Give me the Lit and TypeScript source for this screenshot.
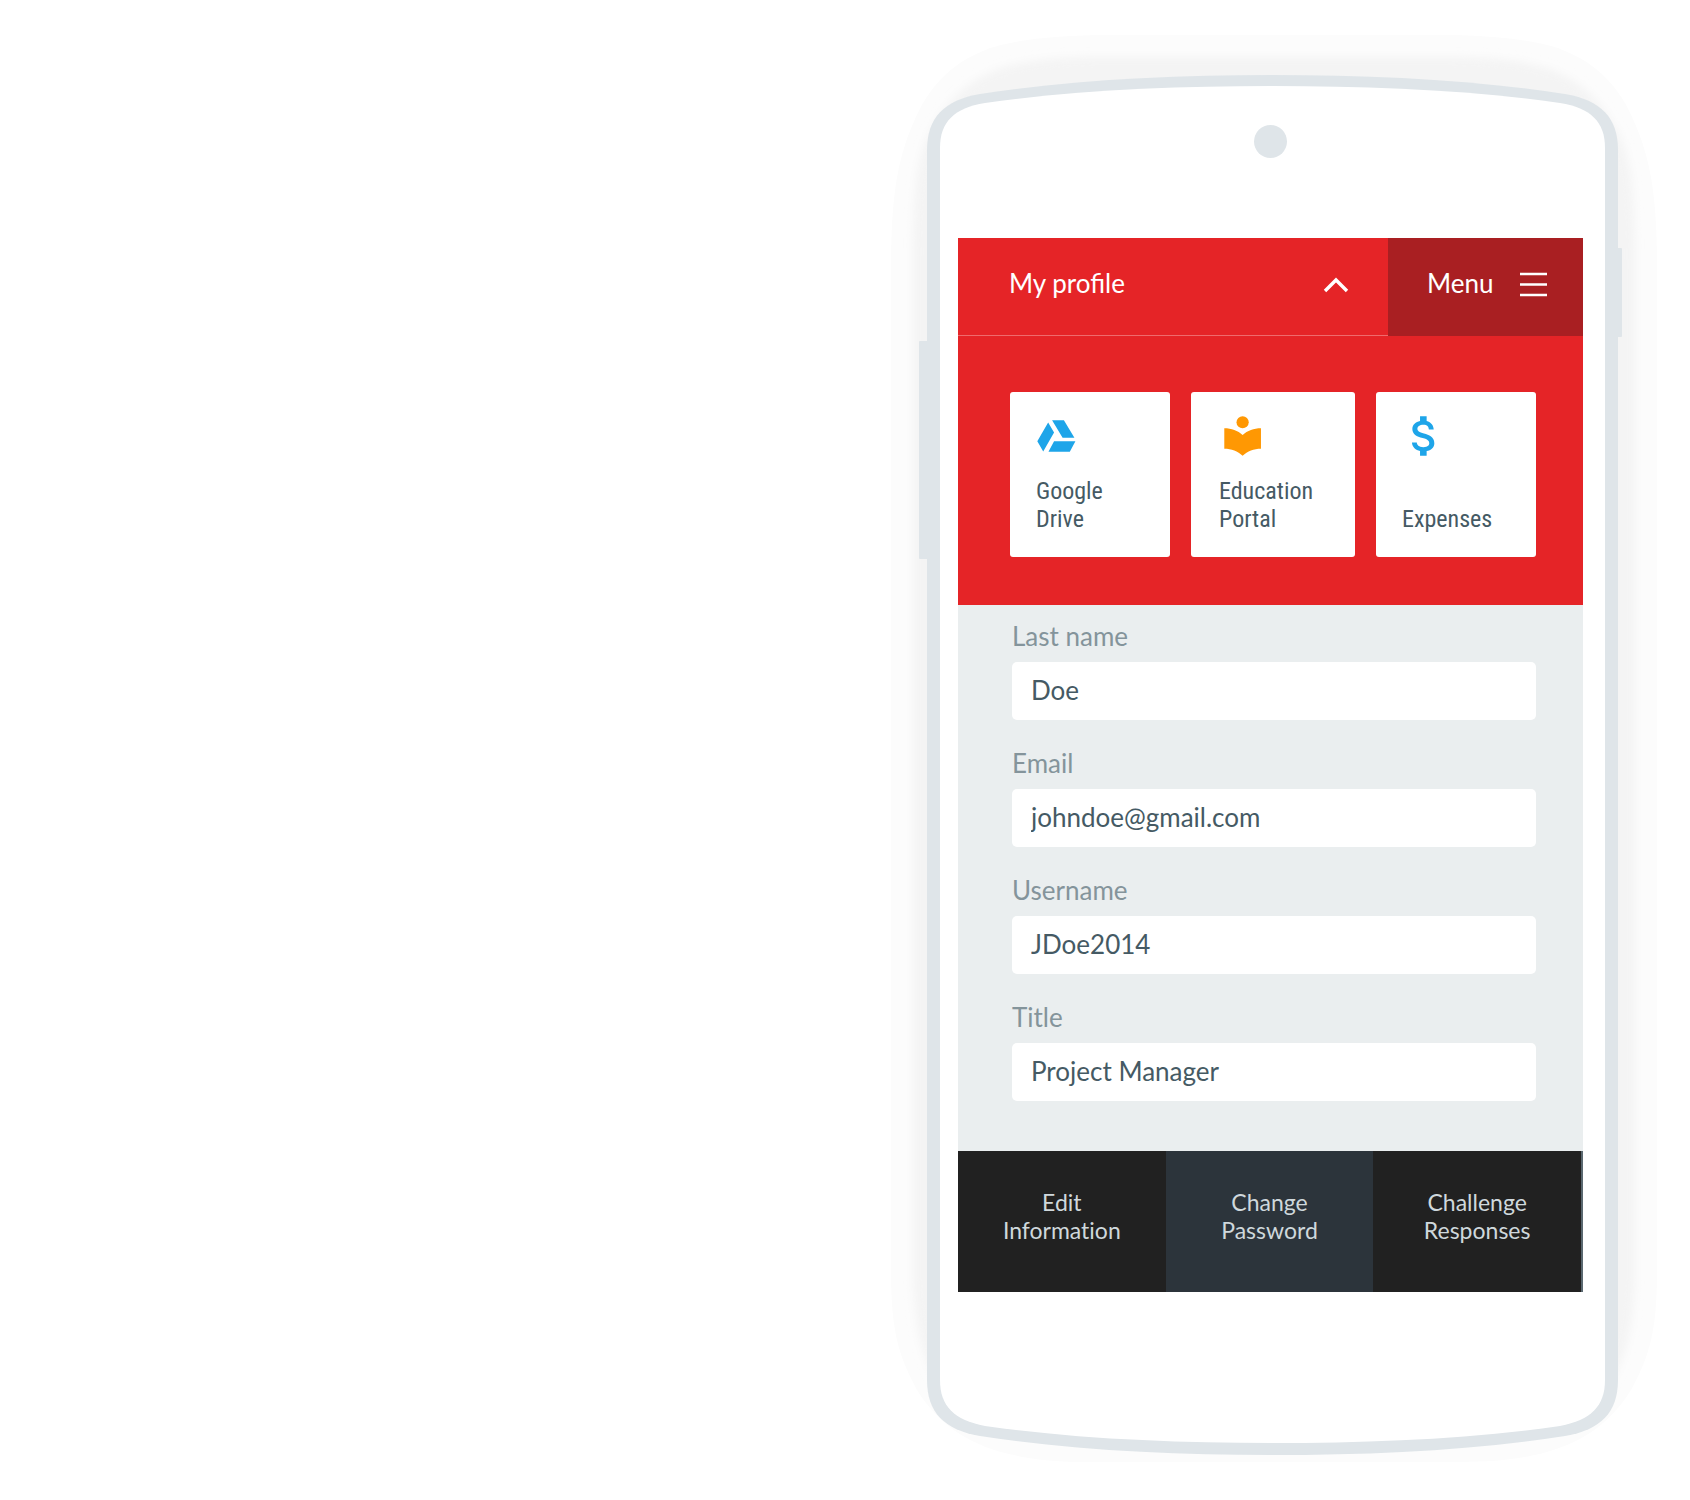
import { LitElement, html, css, svg } from "lit";
import { customElement, property } from "lit/decorators.js";

const driveIcon = svg`<svg class="icon" width="44" height="40" viewBox="257 134 134 120" aria-hidden="true">
  <path d="M261 210 294 153 312 183 279 241zM306 146H342L374 199H338zM312 210H377L360 242H295z" fill="#1ea5e9"/></svg>`;

const libraryIcon = svg`<svg class="icon" width="44" height="40" viewBox="0.4 2 21.6 19.5" aria-hidden="true">
  <path d="M12 11.3C9.64 9.2 6.48 8 3 8v10c3.48 0 6.64 1.25 9 3.5 2.36-2.25 5.52-3.5 9-3.5V8c-3.48 0-6.64 1.2-9 3.3z" fill="#ff9803"/>
  <circle cx="12" cy="5" r="3" fill="#ff9803"/></svg>`;

const moneyIcon = svg`<svg class="icon" width="44" height="40" viewBox="1.8 3 20 18" aria-hidden="true">
  <path d="M11.8 10.9c-2.27-.59-3-1.2-3-2.15 0-1.09 1.01-1.85 2.7-1.85 1.78 0 2.44.85 2.5 2.1h2.21c-.07-1.72-1.12-3.3-3.21-3.81V3h-3v2.16c-1.94.42-3.5 1.68-3.5 3.61 0 2.31 1.91 3.46 4.7 4.13 2.5.6 3 1.48 3 2.41 0 .69-.49 1.79-2.7 1.79-2.06 0-2.87-.92-2.98-2.1h-2.2c.12 2.19 1.76 3.42 3.68 3.83V21h3v-2.15c1.95-.37 3.5-1.5 3.5-3.55 0-2.84-2.43-3.81-4.7-4.4z" fill="#1ea5e9"/></svg>`;

/** Handset outline with side buttons, camera and a soft shadow around the slotted screen. */
@customElement("phone-frame")
export class PhoneFrame extends LitElement {
  static styles = css`
    :host {
      display: flex;
      flex-direction: column;
      position: relative;
      isolation: isolate;
      box-sizing: border-box;
      padding: 50px 35px 163px 31px;
    }
    .shell {
      position: absolute;
      inset: 0;
      width: 100%;
      height: 100%;
      overflow: visible;
      z-index: -1;
    }
    .camera {
      align-self: center;
      width: 33px;
      height: 33px;
      margin-bottom: 80px;
      border-radius: 50%;
      background: #dfe5e9;
    }
  `;

  render() {
    return html`
      <svg class="shell" viewBox="927 75 691 1380" preserveAspectRatio="none" aria-hidden="true">
        <defs>
          <filter id="soft" x="-5%" y="-5%" width="110%" height="110%">
            <feGaussianBlur stdDeviation="4" />
          </filter>
        </defs>
        <path
          fill="#fcfcfc"
          d="M891 270C891 190 898 150 923 103C943 70 965 58 990 48C1020 39 1060 35 1110 35H1438C1488 35 1528 39 1558 48C1583 58 1605 70 1625 103C1650 150 1657 190 1657 270V1270C1657 1330 1650 1355 1631 1390C1600 1440 1550 1462 1460 1462H1088C998 1462 948 1440 917 1390C898 1355 891 1330 891 1270z"
        />
        <path
          fill="#f4f4f4"
          filter="url(#soft)"
          d="M913 270C913 190 916 160 930 132C950 95 975 76 1005 67C1035 59 1060 57 1110 57H1438C1488 57 1513 59 1543 67C1573 76 1598 95 1618 132C1632 160 1635 190 1635 270V1280C1633 1330 1625 1365 1605 1390H943C923 1365 915 1330 913 1280z"
        />
        <rect x="919" y="341" width="12" height="218" rx="1" fill="#dfe5e9" />
        <rect x="1612" y="248" width="10" height="89" rx="1" fill="#dfe5e9" />
        <path
          fill="#dfe5e9"
          d="M927 150C927 118 944 100 980 94C1070 80 1170 75 1272 75C1375 75 1475 80 1565 94C1601 100 1618 118 1618 150V1380C1618 1412 1601 1430 1565 1436C1475 1450 1375 1455 1272 1455C1170 1455 1070 1450 980 1436C944 1430 927 1412 927 1380z"
        />
        <path
          fill="#fff"
          d="M940 148C940 122 954 108 985 103C1075 90 1175 86 1272 86C1370 86 1470 90 1560 103C1591 108 1605 122 1605 148V1380C1605 1406 1591 1420 1560 1426C1470 1439 1370 1443 1272 1443C1175 1443 1075 1439 985 1426C954 1420 940 1406 940 1380z"
        />
      </svg>
      <div class="camera"></div>
      <slot></slot>
    `;
  }
}

interface Field {
  id: string;
  label: string;
  value: string;
  type: string;
}

/** Profile page: header, shortcut cards, form and bottom actions. */
@customElement("profile-screen")
export class ProfileScreen extends LitElement {
  @property({ attribute: false }) fields: Field[] = [
    { id: "last-name", label: "Last name", value: "Doe", type: "text" },
    { id: "email", label: "Email", value: "johndoe@gmail.com", type: "email" },
    { id: "username", label: "Username", value: "JDoe2014", type: "text" },
    { id: "title", label: "Title", value: "Project Manager", type: "text" },
  ];

  static styles = css`
    :host {
      display: block;
      font-family: Lato, "Noto Sans", sans-serif;
      font-size: 26px;
      line-height: 28px;
    }
    button,
    input {
      font: inherit;
      color: inherit;
      border: 0;
      margin: 0;
      cursor: pointer;
    }
    .header {
      display: grid;
      grid-template-columns: minmax(0, 1fr) 195px;
      color: #fff;
      background: #e52427;
    }
    .bar {
      display: flex;
      align-items: center;
      justify-content: space-between;
      height: 98px;
      padding: 0 39px 4px 51px;
      background: none;
      border-bottom: 1px solid #ef6b6d;
    }
    .menu {
      padding: 0 36px 4px 39px;
      background: #a91f22;
      border-bottom-color: #a91f22;
    }
    .caption {
      padding-bottom: 4px;
    }
    .glyph {
      display: block;
      flex: none;
    }
    .shortcuts {
      display: grid;
      grid-template-columns: 160fr 164fr 160fr;
      gap: 21px;
      padding: 56px 47px 48px 52px;
      background: #e52427;
    }
    .card {
      display: flex;
      flex-direction: column;
      justify-content: space-between;
      align-items: flex-start;
      box-sizing: border-box;
      height: 165px;
      padding: 24px 8px 24px 26px;
      border-radius: 3px;
      background: #fff;
      color: #455a64;
      font-family: "Roboto Condensed", "Liberation Sans Narrow", Roboto, sans-serif;
      font-size: 24px;
      text-decoration: none;
    }
    .wide {
      padding-left: 28px;
    }
    .form {
      display: flex;
      flex-direction: column;
      gap: 29px;
      padding: 17px 47px 50px 54px;
      background: #eaeeef;
    }
    .field {
      display: flex;
      flex-direction: column;
      gap: 12px;
    }
    .label {
      color: #84949b;
    }
    .input {
      box-sizing: border-box;
      width: 100%;
      height: 58px;
      padding: 0 19px 2px;
      border-radius: 5px;
      background: #fff;
      color: #455a64;
      cursor: text;
    }
    .actions {
      display: grid;
      grid-template-columns: repeat(3, minmax(0, 1fr));
      border-right: 2px solid #5a6870;
      color: #cfd8dc;
      font-size: 23px;
      font-variant-ligatures: none;
    }
    .action {
      height: 141px;
      padding: 0 32px 12px;
      background: #212121;
      font-variant-ligatures: none;
    }
    .current {
      background: #2c343b;
    }
  `;

  render() {
    return html`
      <header class="header">
        <button class="bar" type="button" aria-expanded="true">
          <span class="caption">My profile</span>
          <svg class="glyph" width="26" height="16" viewBox="0 0 26 16" aria-hidden="true">
            <path d="M2 14 13 3 24 14" fill="none" stroke="#fff" stroke-width="3.4" />
          </svg>
        </button>
        <button class="bar menu" type="button">
          <span class="caption">Menu</span>
          <svg class="glyph" width="27" height="25" viewBox="0 0 27 25" aria-hidden="true">
            <path d="M0 2H27M0 12.5H27M0 23H27" fill="none" stroke="#fff" stroke-width="2.4" />
          </svg>
        </button>
      </header>
      <nav class="shortcuts">
        <a class="card" href="#drive">${driveIcon}<span>Google<br />Drive</span></a>
        <a class="card wide" href="#education">${libraryIcon}<span>Education<br />Portal</span></a>
        <a class="card" href="#expenses">${moneyIcon}<span>Expenses</span></a>
      </nav>
      <form class="form">
        ${this.fields.map(
          (f) => html`
            <div class="field">
              <label class="label" for=${f.id}>${f.label}</label>
              <input class="input" id=${f.id} type=${f.type} .value=${f.value} />
            </div>
          `
        )}
      </form>
      <footer class="actions">
        <button class="action" type="button">Edit<br />Information</button>
        <button class="action current" type="button">Change<br />Password</button>
        <button class="action" type="button">Challenge<br />Responses</button>
      </footer>
    `;
  }
}

@customElement("app-root")
export class AppRoot extends LitElement {
  static styles = css`
    :host {
      display: grid;
      grid-template-columns: minmax(0, 691px);
      justify-content: end;
      padding: 75px 72px 45px;
      background: #fff;
    }
  `;

  render() {
    return html`<phone-frame><profile-screen></profile-screen></phone-frame>`;
  }
}
